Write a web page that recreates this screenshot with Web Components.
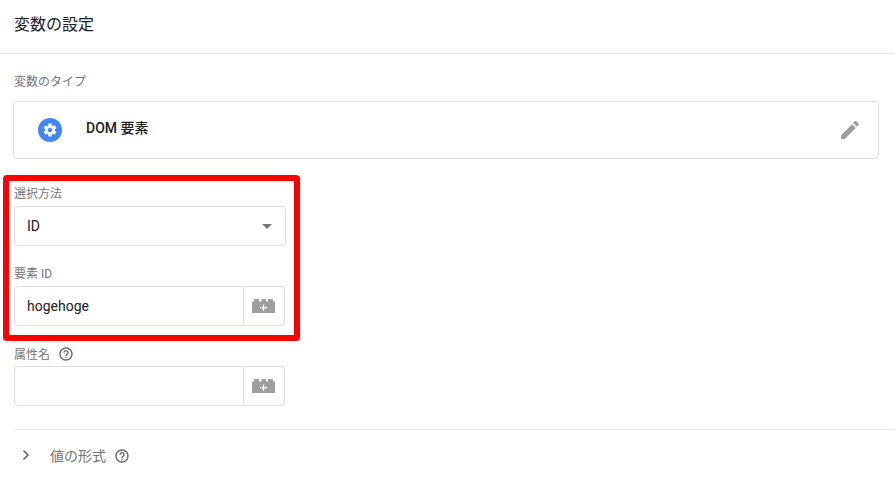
<!DOCTYPE html>
<html lang="ja">
<head>
<meta charset="utf-8">
<title>変数の設定</title>
<style>
    html, body { margin: 0; padding: 0; background: #fff; }
    body { font-family: Roboto, "Noto Sans CJK JP", sans-serif; color: #212121; width: 895px; height: 480px; overflow: hidden; }
</style>
</head>
<body>

<var-page>
    <var-type-card slot="type">DOM 要素</var-type-card>
    <var-field label="選択方法" slot="highlighted"><var-select value="ID"></var-select></var-field>
    <var-field label="要素 ID" slot="highlighted"><var-input value="hogehoge"></var-input></var-field>
    <var-field label="属性名" help slot="rest"><var-input></var-input></var-field>
</var-page>

<script>
const HELP_ICON = `<svg width="16" height="16" viewBox="0 0 24 24" fill="#5f6368"><path d="M11 18h2v-2h-2v2zm1-16C6.48 2 2 6.48 2 12s4.48 10 10 10 10-4.48 10-10S17.52 2 12 2zm0 18c-4.41 0-8-3.59-8-8s3.59-8 8-8 8 3.59 8 8-3.59 8-8 8zm0-14c-2.21 0-4 1.79-4 4h2c0-1.1.9-2 2-2s2 .9 2 2c0 2-3 1.75-3 5h2c0-2.25 3-2.5 3-5 0-2.21-1.79-4-4-4z"/></svg>`;

class VarPage extends HTMLElement {
    constructor() {
        super();
        this.attachShadow({ mode: 'open' });
        this.shadowRoot.innerHTML = `
            <style>
                :host { display: block; position: relative; height: 480px; }
                header {
                    height: 53px;
                    border-bottom: 1px solid #dcdcdc;
                    padding-left: 14px;
                    font-size: 16px;
                    line-height: 49px;
                }
                .type-label { font-size: 12px; line-height: 16px; color: #757575; padding: 20px 0 0 14px; }
                .type { padding: 11px 16px 0 13px; }
                .body { padding: 0 0 0 14px; }
                .group { display: flex; flex-direction: column; gap: 18px; width: 272px; padding-top: 25px; }
                .rest { width: 272px; padding-top: 19px; }
                hr { border: 0; border-top: 1px solid #e6e6e6; margin: 23px 0 0 0; }
                .format {
                    display: flex; align-items: center;
                    height: 50px;
                    font-size: 14px;
                    color: #757575;
                }
                .chevron { width: 8px; margin-left: 8px; margin-right: 20px; display: flex; }
                .format .help { margin-left: 8px; display: flex; margin-top: 2px; }
                .mark {
                    position: absolute;
                    left: 3px; top: 175px;
                    width: 285px; height: 154px;
                    border: 6px solid #ff0000;
                    border-radius: 4px;
                    pointer-events: none;
                }
            </style>
            <header>変数の設定</header>
            <div class="type-label">変数のタイプ</div>
            <div class="type"><slot name="type"></slot></div>
            <div class="body">
                <div class="group"><slot name="highlighted"></slot></div>
                <div class="rest"><slot name="rest"></slot></div>
                <hr>
                <div class="format">
                    <span class="chevron">
                        <svg width="8" height="12" viewBox="0 0 8 12" fill="none" stroke="#5f6368" stroke-width="1.6"><path d="M1.5 1.5 6 6l-4.500 4.500"/></svg>
                    </span>
                    <span>値の形式</span>
                    <span class="help">${HELP_ICON}</span>
                </div>
            </div>
            <div class="mark"></div>
        `;
    }
}

class VarTypeCard extends HTMLElement {
    constructor() {
        super();
        this.attachShadow({ mode: 'open' });
        this.shadowRoot.innerHTML = `
            <style>
                :host { display: block; }
                .card {
                    box-sizing: border-box;
                    height: 58px;
                    border: 1px solid #dcdcdc;
                    border-radius: 4px;
                    display: flex; align-items: center;
                    padding: 0 16px 0 24px;
                    font-size: 14px;
                    font-weight: 500;
                }
                .icon { width: 24px; height: 24px; display: flex; margin-right: 24px; }
                .name { flex: 1; padding-bottom: 7px; }
                .edit { display: flex; }
            </style>
            <div class="card">
                <span class="icon">
                    <svg width="24" height="24" viewBox="0 0 24 24">
                        <circle cx="12" cy="12" r="12" fill="#4285f4"/>
                        <g transform="translate(4.200 4.200) scale(.65)">
                            <path fill="#fff" d="M19.430 12.980c.04-.32.07-.64.07-.98s-.03-.66-.07-.98l2.110-1.650c.19-.15.24-.42.120-.64l-2-3.460c-.12-.22-.39-.3-.61-.22l-2.490 1c-.52-.4-1.080-.73-1.690-.98l-.38-2.650C14.460 2.180 14.250 2 14 2h-4c-.25 0-.46.18-.49.42l-.38 2.650c-.61.25-1.170.59-1.690.98l-2.490-1c-.23-.09-.49 0-.61.22l-2 3.460c-.13.22-.07.49.12.64l2.110 1.650c-.04.32-.07.65-.07.98s.03.66.07.98l-2.110 1.650c-.19.15-.24.42-.12.64l2 3.460c.12.22.39.3.61.22l2.490-1c.52.4 1.080.73 1.690.98l.38 2.650c.03.24.24.42.49.42h4c.25 0 .46-.18.49-.42l.38-2.650c.61-.25 1.170-.59 1.690-.98l2.490 1c.23.09.49 0 .61-.22l2-3.460c.12-.22.07-.49-.12-.64l-2.110-1.650zM12 15.500c-1.930 0-3.500-1.570-3.500-3.500s1.570-3.500 3.500-3.500 3.500 1.570 3.500 3.500-1.570 3.500-3.500 3.500z"/>
                        </g>
                    </svg>
                </span>
                <span class="name"><slot></slot></span>
                <span class="edit">
                    <svg width="24" height="24" viewBox="0 0 24 24" fill="#9e9e9e"><path d="M3 17.250V21h3.750L17.810 9.940l-3.750-3.750L3 17.250zM20.710 7.040c.39-.39.39-1.020 0-1.410l-2.340-2.340c-.39-.39-1.020-.39-1.410 0l-1.830 1.830 3.750 3.750 1.830-1.830z"/></svg>
                </span>
            </div>
        `;
    }
}

class VarField extends HTMLElement {
    connectedCallback() {
        if (this.shadowRoot) return;
        this.attachShadow({ mode: 'open' });
        const help = this.hasAttribute('help') ? `<span class="help">${HELP_ICON}</span>` : '';
        this.shadowRoot.innerHTML = `
            <style>
                :host { display: block; }
                label {
                    display: flex; align-items: center;
                    height: 16px;
                    font-size: 12px;
                    color: #757575;
                    margin-bottom: 6px;
                }
                :host([help]) label { margin-bottom: 5px; }
                .help { display: flex; margin-left: 8px; margin-top: 2px; }
            </style>
            <label>${this.getAttribute('label')}${help}</label>
            <slot></slot>
        `;
    }
}

class VarSelect extends HTMLElement {
    connectedCallback() {
        if (this.shadowRoot) return;
        this.attachShadow({ mode: 'open' });
        this.shadowRoot.innerHTML = `
            <style>
                :host { display: block; }
                .box {
                    box-sizing: border-box;
                    height: 40px;
                    border: 1px solid #dcdcdc;
                    border-radius: 4px;
                    display: flex; align-items: center; justify-content: space-between;
                    padding: 0 13px 0 12px;
                    font-size: 14px;
                }
                .arrow { width: 0; height: 0; border: 5px solid transparent; border-top-color: #757575; border-bottom: 0; }
            </style>
            <div class="box"><span>${this.getAttribute('value') || ''}</span><span class="arrow"></span></div>
        `;
    }
}

class VarInput extends HTMLElement {
    connectedCallback() {
        if (this.shadowRoot) return;
        this.attachShadow({ mode: 'open' });
        this.shadowRoot.innerHTML = `
            <style>
                :host { display: block; }
                .box {
                    box-sizing: border-box;
                    width: 271px;
                    height: 40px;
                    border: 1px solid #dcdcdc;
                    border-radius: 4px;
                    display: flex; align-items: stretch;
                    font-size: 14px;
                }
                .value { flex: 1; padding-left: 12px; line-height: 38px; }
                .picker {
                    box-sizing: border-box;
                    width: 41px;
                    padding-right: 2px;
                    border-left: 1px solid #dcdcdc;
                    display: flex; align-items: center; justify-content: center;
                }
            </style>
            <div class="box">
                <span class="value">${this.getAttribute('value') || ''}</span>
                <span class="picker">
                    <svg width="23" height="14" viewBox="0 0 23 14">
                        <path fill="#9e9e9e" d="M0 2.500h2V0h5v2.500h2.500V0h4.500v2.500H16V0h5v2.500h2V14H0z"/>
                        <path stroke="#fff" stroke-width="1.300" d="M11.500 5.500v6.500M8 8.700h7"/>
                    </svg>
                </span>
            </div>
        `;
    }
}

customElements.define('var-page', VarPage);
customElements.define('var-type-card', VarTypeCard);
customElements.define('var-field', VarField);
customElements.define('var-select', VarSelect);
customElements.define('var-input', VarInput);
</script>
</body>
</html>
